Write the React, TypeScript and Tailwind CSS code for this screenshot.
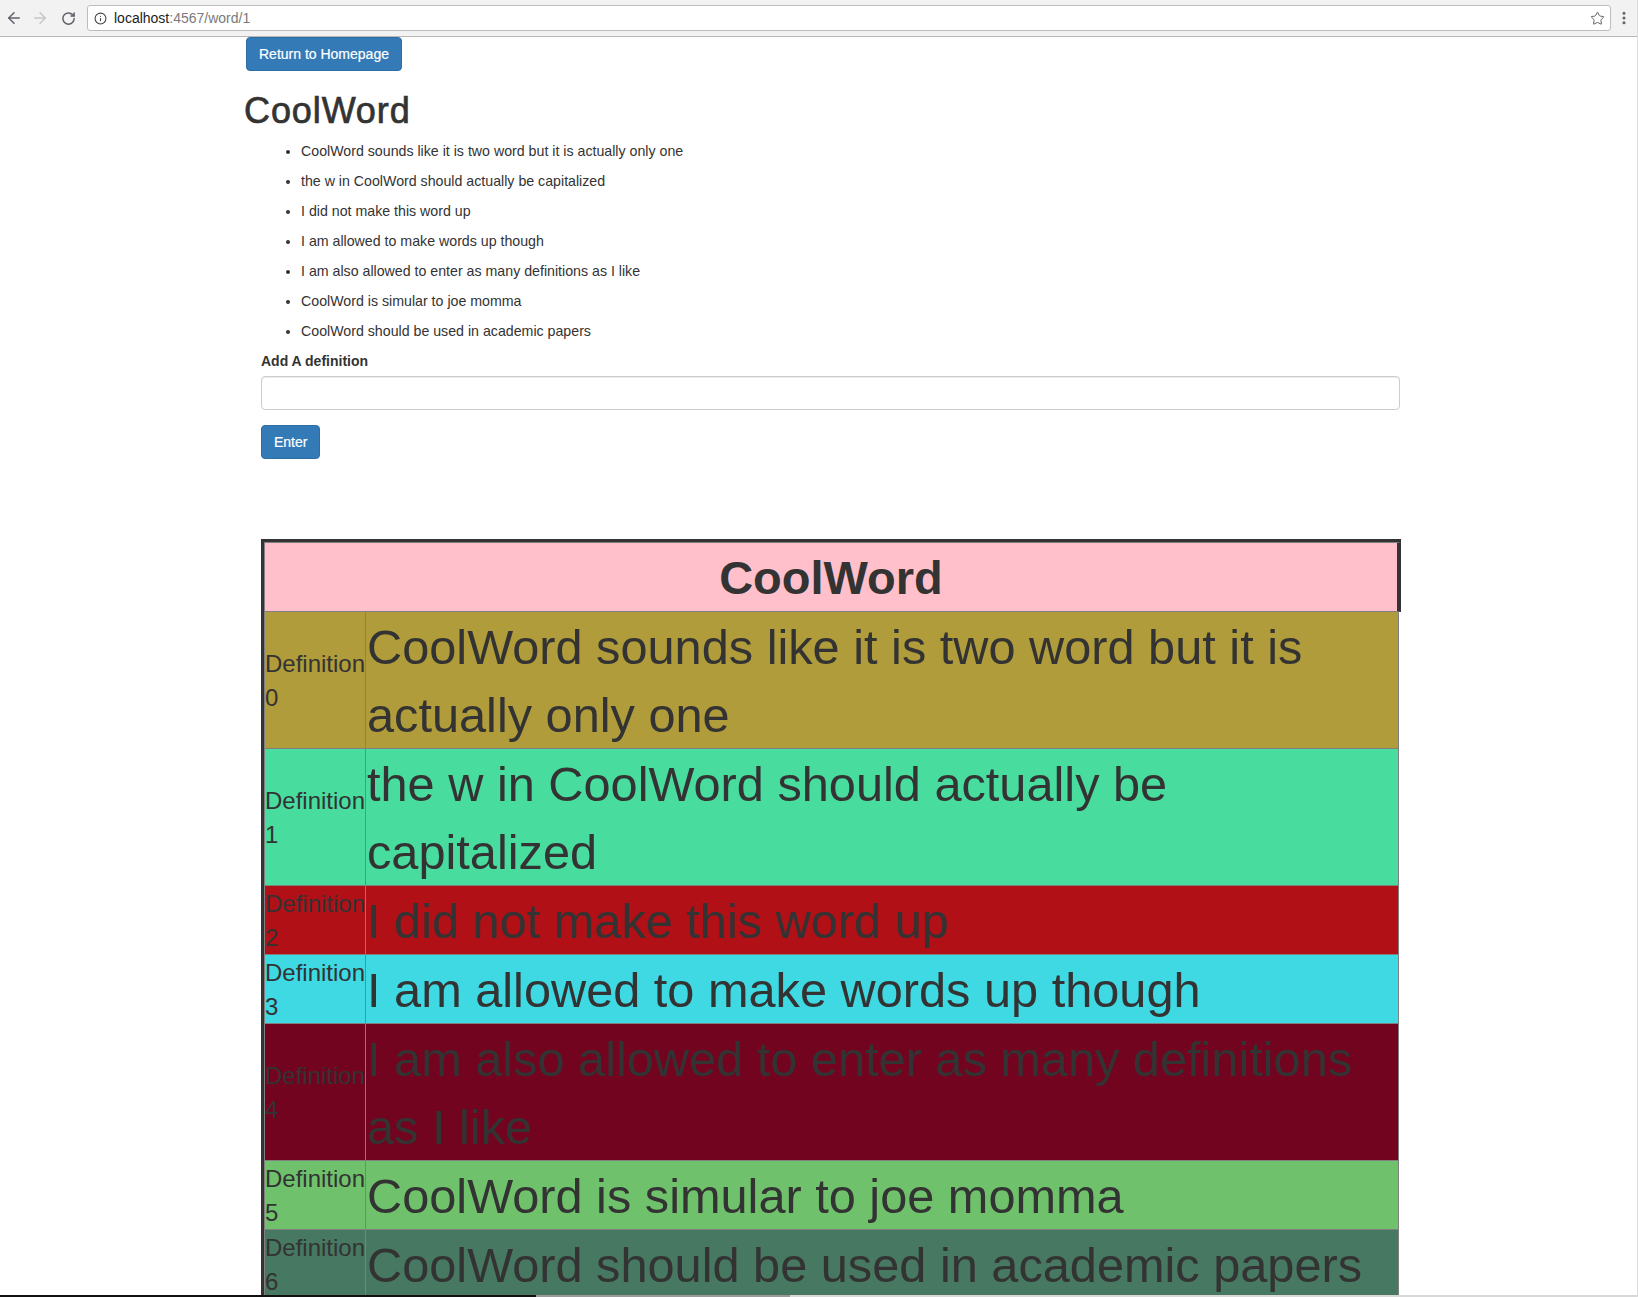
import { ArrowLeft, ArrowRight, RotateCw, Info, Star, EllipsisVertical } from "lucide-react";

const defs = [
  { text: "CoolWord sounds like it is two word but it is actually only one", bg: "bg-[#b09c3a]" },
  { text: "the w in CoolWord should actually be capitalized", bg: "bg-[#48dc9f]" },
  { text: "I did not make this word up", bg: "bg-[#b01016]" },
  { text: "I am allowed to make words up though", bg: "bg-[#3ed9e3]" },
  { text: "I am also allowed to enter as many definitions as I like", bg: "bg-[#72041f]" },
  { text: "CoolWord is simular to joe momma", bg: "bg-[#6fc26b]" },
  { text: "CoolWord should be used in academic papers", bg: "bg-[#477861]" },
];

export default function App() {
  return (
    <div className="relative w-[1638px] h-[1297px] overflow-hidden bg-white text-[#333] font-['Liberation_Sans',Arial,sans-serif] border-r border-r-[#dcdcdc]">
      {/* browser chrome */}
      <div className="h-[37px] flex items-center bg-[#f2f2f2] border-b border-b-[#b8b8b8]">
        <div className="w-[28px] flex justify-center">
          <ArrowLeft size={18} strokeWidth={2} color="#5f6368" />
        </div>
        <div className="w-[24px] flex justify-center">
          <ArrowRight size={18} strokeWidth={2} color="#c6c6c6" />
        </div>
        <div className="w-[32px] flex justify-center">
          <RotateCw size={15} strokeWidth={2.4} color="#5f6368" />
        </div>
        <div className="ml-[3px] flex-1 h-[26px] flex items-center bg-white border border-[#bdbdbd] rounded-[3px] pl-[6px] pr-[5px]">
          <Info size={13} strokeWidth={2} color="#444" />
          <span className="ml-[7px] text-[14px] leading-none text-[#222]">localhost</span>
          <span className="text-[14px] leading-none text-[#7a7a7a]">:4567/word/1</span>
          <div className="flex-1" />
          <Star size={15} strokeWidth={1.6} color="#5f6368" />
        </div>
        <div className="w-[26px] flex justify-center">
          <EllipsisVertical size={16} strokeWidth={2.6} color="#5f6368" />
        </div>
      </div>

      {/* page */}
      <div className="pl-[246px]">
        <button className="block px-3 py-[6px] text-[14px] leading-5 text-white bg-[#337ab7] border border-[#2e6da4] rounded [-webkit-text-stroke:0.2px_#fff]">
          Return to Homepage
        </button>
      </div>
      <h1 className="ml-[244px] mt-5 mb-[10px] text-[36px] leading-[1.1] font-medium tracking-[0.9px] [-webkit-text-stroke:0.7px_#333]">
        CoolWord
      </h1>

      <div className="ml-[261px] w-[1140px]">
        <ul className="list-disc pl-10 text-[14.2px] leading-5">
          {defs.map((d, i) => (
            <li key={i} className="mb-[10px]">
              {d.text}
            </li>
          ))}
        </ul>
        <label className="block font-bold text-[14px] leading-5 mb-[5px]">Add A definition</label>
        <input
          type="text"
          className="block w-[1139px] h-[34px] px-3 bg-white border border-[#cccccc] rounded shadow-[inset_0_1px_1px_rgba(0,0,0,0.075)] outline-none"
        />
        <button className="block mt-[15px] px-3 py-[6px] text-[14px] leading-5 text-white bg-[#337ab7] border border-[#2e6da4] rounded [-webkit-text-stroke:0.2px_#fff]">
          Enter
        </button>

        {/* table */}
        <div className="mt-[80px] w-[1140px] border-l-[3px] border-t-[3px] border-l-[#333] border-t-[#333]">
          <div className="h-[70px] border-t border-b border-l border-r-4 border-t-[#808080] border-b-[#808080] border-l-[#808080] border-r-[#333] bg-[#ffc0cb] text-center text-[47px] font-bold leading-[68px]">
            <div className="pt-[1px] -mb-[1px]">CoolWord</div>
          </div>
          {defs.map((d, i) => (
            <div
              key={i}
              className={`flex w-[1135px] border-l border-r border-b border-l-[#808080] border-r-[#808080] border-b-[#808080] ${d.bg}`}
            >
              <div className="w-[101px] shrink-0 flex items-center border-r border-r-[#808080] text-[24px] leading-[34px]">
                <span className="pt-[1px] -mb-[1px]">Definition {i}</span>
              </div>
              <div className="flex-1 pl-px text-[48.7px] leading-[68px]">
                <div className="pt-[1px] -mb-[1px]">{d.text}</div>
              </div>
            </div>
          ))}
        </div>
      </div>

      {/* window bottom edge */}
      <div className="absolute left-0 bottom-0 w-full h-[2px] flex">
        <div className="w-[536px] bg-[#111]" />
        <div className="w-[254px] bg-[#9a9a9a]" />
        <div className="flex-1 bg-[#d8d8d8]" />
      </div>
    </div>
  );
}
